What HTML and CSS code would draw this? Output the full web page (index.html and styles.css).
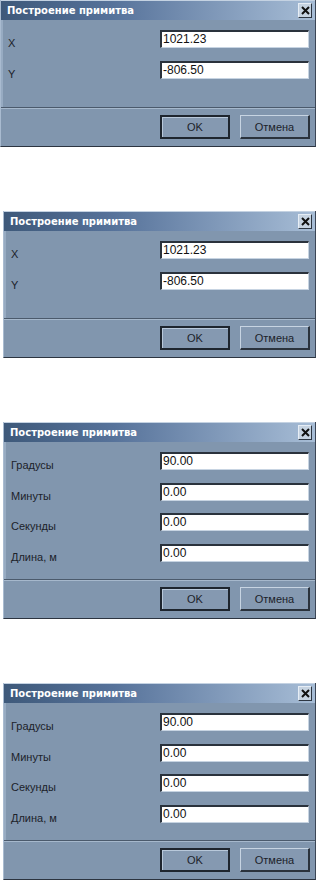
FILE: index.html
```html
<!DOCTYPE html>
<html lang="ru">
<head>
    <meta charset="UTF-8">
    <meta name="viewport" content="width=device-width, initial-scale=1.0">
    <title>Построение примитва</title>
    <link rel="stylesheet" href="styles.css">
</head>
<body>
    <div class="dialog first">
        <div class="titlebar">
            <span class="title">Построение примитва</span>
            <span class="close">
                <svg width="9" height="9" viewBox="0 0 9 9"><path d="M1 1L8 8M8 1L1 8" stroke="#111" stroke-width="2"/></svg>
            </span>
        </div>
        <div class="form two">
            <label class="label">X</label>
            <div class="field">1021.23</div>
            <label class="label">Y</label>
            <div class="field">-806.50</div>
        </div>
        <div class="footer">
            <button class="btn default">OK</button>
            <button class="btn">Отмена</button>
        </div>
    </div>

    <div class="dialog">
        <div class="titlebar">
            <span class="title">Построение примитва</span>
            <span class="close">
                <svg width="9" height="9" viewBox="0 0 9 9"><path d="M1 1L8 8M8 1L1 8" stroke="#111" stroke-width="2"/></svg>
            </span>
        </div>
        <div class="form two">
            <label class="label">X</label>
            <div class="field">1021.23</div>
            <label class="label">Y</label>
            <div class="field">-806.50</div>
        </div>
        <div class="footer">
            <button class="btn default">OK</button>
            <button class="btn">Отмена</button>
        </div>
    </div>

    <div class="dialog">
        <div class="titlebar">
            <span class="title">Построение примитва</span>
            <span class="close">
                <svg width="9" height="9" viewBox="0 0 9 9"><path d="M1 1L8 8M8 1L1 8" stroke="#111" stroke-width="2"/></svg>
            </span>
        </div>
        <div class="form four">
            <label class="label">Градусы</label>
            <div class="field">90.00</div>
            <label class="label">Минуты</label>
            <div class="field">0.00</div>
            <label class="label">Секунды</label>
            <div class="field">0.00</div>
            <label class="label">Длина, м</label>
            <div class="field">0.00</div>
        </div>
        <div class="footer">
            <button class="btn default">OK</button>
            <button class="btn">Отмена</button>
        </div>
    </div>

    <div class="dialog">
        <div class="titlebar">
            <span class="title">Построение примитва</span>
            <span class="close">
                <svg width="9" height="9" viewBox="0 0 9 9"><path d="M1 1L8 8M8 1L1 8" stroke="#111" stroke-width="2"/></svg>
            </span>
        </div>
        <div class="form four">
            <label class="label">Градусы</label>
            <div class="field">90.00</div>
            <label class="label">Минуты</label>
            <div class="field">0.00</div>
            <label class="label">Секунды</label>
            <div class="field">0.00</div>
            <label class="label">Длина, м</label>
            <div class="field">0.00</div>
        </div>
        <div class="footer">
            <button class="btn default">OK</button>
            <button class="btn">Отмена</button>
        </div>
    </div>
</body>
</html>
```

FILE: styles.css
```css
body {
    margin: 0;
    padding: 0;
    background: #fff;
    font-family: "Liberation Sans", Arial, sans-serif;
    width: 320px;
}

.dialog {
    box-sizing: border-box;
    width: 313px;
    margin: 0 0 64px 3px;
    background: #8196ae;
    border-left: 1px solid #a9bbd0;
    border-right: 1px solid #3b4656;
    border-bottom: 1px solid #2c3440;
}

.dialog.first {
    width: 316px;
    margin-left: 0;
}

.dialog:last-child {
    margin-bottom: 0;
}

.titlebar {
    height: 19px;
    display: flex;
    align-items: center;
    justify-content: space-between;
    padding: 0 3px 0 6px;
    background: linear-gradient(90deg, #3e597a 0%, #56729a 35%, #a7bdd6 100%);
    border-top: 1px solid #c4d2e2;
}

.title {
    color: #fff;
    font-family: "DejaVu Sans", sans-serif;
    font-weight: bold;
    font-size: 10px;
}

.close {
    width: 12px;
    height: 13px;
    display: flex;
    align-items: center;
    justify-content: center;
    background: #c6d3e1;
    border-top: 1px solid #e6edf5;
    border-left: 1px solid #e6edf5;
    border-right: 1px solid #2d3642;
    border-bottom: 1px solid #2d3642;
}

.form {
    display: grid;
    grid-template-columns: 1fr 149px;
    align-content: start;
    row-gap: 11px;
    padding: 10px 6px 0 5px;
    border-left: 2px solid #97abc2;
}

.form.two {
    height: 77px;
}

.form.four {
    height: 127px;
    row-gap: 10.5px;
}

.label {
    font-size: 11px;
    color: #1c222a;
    padding-top: 6px;
    line-height: 14px;
}

.field {
    box-sizing: border-box;
    height: 18px;
    background: #fff;
    border-top: 2px solid #2a323c;
    border-left: 2px solid #2a323c;
    border-right: 1px solid #c7d4e2;
    border-bottom: 1px solid #c7d4e2;
    font-size: 12px;
    line-height: 15px;
    padding-left: 1px;
    color: #111;
}

.footer {
    display: flex;
    justify-content: flex-end;
    gap: 10px;
    padding: 7px 5px 7px 0;
    border-top: 1px solid #4b5a6c;
    box-shadow: inset 0 1px 0 #a6b8cc;
}

.btn {
    box-sizing: border-box;
    width: 70px;
    height: 24px;
    background: #8599b1;
    font-family: "Liberation Sans", Arial, sans-serif;
    font-size: 11px;
    color: #1c222a;
    border-top: 1px solid #c7d4e2;
    border-left: 1px solid #c7d4e2;
    border-right: 2px solid #2a323c;
    border-bottom: 2px solid #2a323c;
    padding: 0;
}

.btn.default {
    border: 2px solid #1e252e;
    box-shadow: inset 1px 1px 0 #b8c8da;
}
```
